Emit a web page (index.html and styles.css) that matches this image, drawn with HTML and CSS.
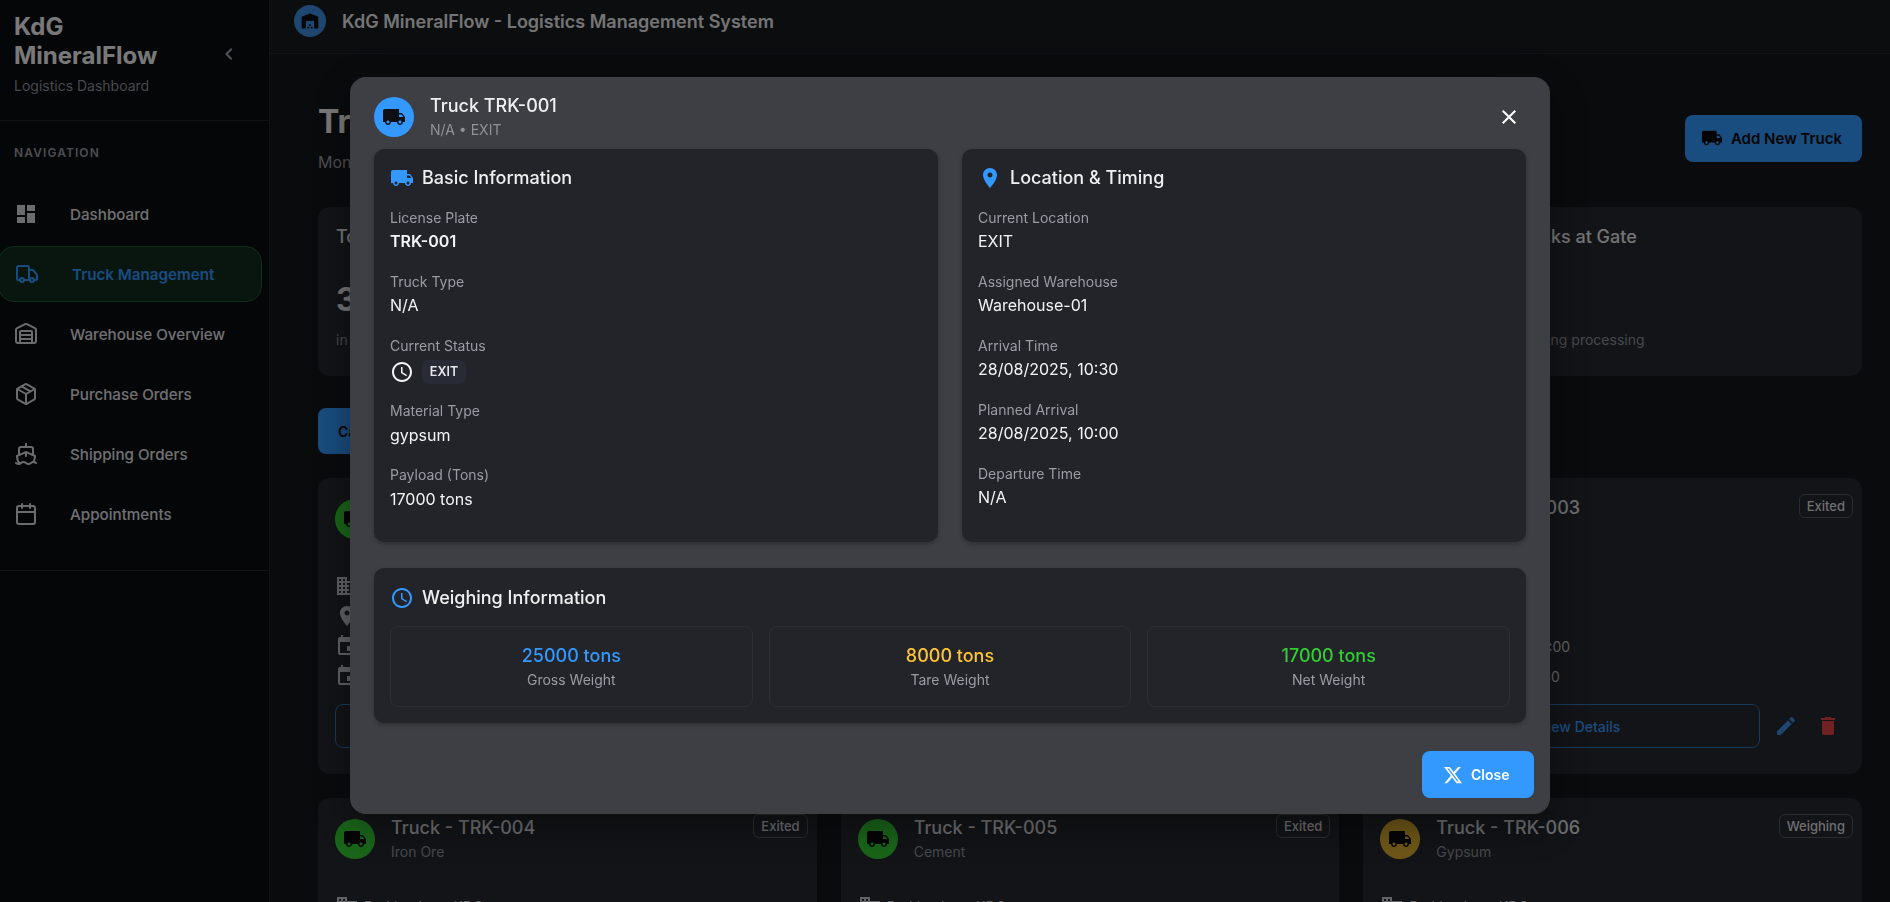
FILE: index.html
```html
<!DOCTYPE html>
<html lang="en">
<head>
<meta charset="UTF-8">
<meta name="viewport" content="width=device-width, initial-scale=1.0">
<title>KdG MineralFlow - Truck Management</title>
<link rel="stylesheet" href="styles.css">
</head>
<body>
<svg class="icon-defs" aria-hidden="true">
    <symbol id="i-truck" viewBox="0 0 24 24"><path d="M20 8h-3V4H3c-1.1 0-2 .9-2 2v11h2c0 1.66 1.34 3 3 3s3-1.34 3-3h6c0 1.66 1.34 3 3 3s3-1.34 3-3h2v-5zM6 18.5c-.83 0-1.5-.67-1.5-1.5s.67-1.5 1.5-1.5 1.5.67 1.5 1.5-.67 1.5-1.5 1.5m13.5-9 1.96 2.5H17V9.5zM18 18.5c-.83 0-1.5-.67-1.5-1.5s.67-1.5 1.5-1.5 1.5.67 1.5 1.5-.67 1.5-1.5 1.5"/></symbol>
    <symbol id="i-pin" viewBox="0 0 24 24"><path d="M12 2C8.13 2 5 5.13 5 9c0 5.25 7 13 7 13s7-7.75 7-13c0-3.87-3.13-7-7-7m0 9.5c-1.38 0-2.5-1.12-2.5-2.5s1.12-2.5 2.5-2.5 2.5 1.12 2.5 2.5-1.12 2.5-2.5 2.5"/></symbol>
    <symbol id="i-clock" viewBox="0 0 24 24"><path d="M11.99 2C6.47 2 2 6.48 2 12s4.47 10 9.99 10C17.52 22 22 17.52 22 12S17.52 2 11.99 2M12 20c-4.42 0-8-3.58-8-8s3.58-8 8-8 8 3.58 8 8-3.58 8-8 8m.5-13H11v6l5.25 3.15.75-1.23-4.5-2.67z"/></symbol>
    <symbol id="i-edit" viewBox="0 0 24 24"><path d="M3 17.25V21h3.75L17.81 9.94l-3.75-3.75zM20.71 7.04c.39-.39.39-1.02 0-1.41l-2.34-2.34a.996.996 0 0 0-1.41 0l-1.83 1.83 3.75 3.75z"/></symbol>
    <symbol id="i-delete" viewBox="0 0 24 24"><path d="M6 19c0 1.1.9 2 2 2h8c1.1 0 2-.9 2-2V7H6zM19 4h-3.5l-1-1h-5l-1 1H5v2h14z"/></symbol>
    <symbol id="i-domain" viewBox="0 0 24 24"><path d="M12 7V3H2v18h20V7zM6 19H4v-2h2zm0-4H4v-2h2zm0-4H4V9h2zm0-4H4V5h2zm4 12H8v-2h2zm0-4H8v-2h2zm0-4H8V9h2zm0-4H8V5h2zm10 12h-8v-2h2v-2h-2v-2h2v-2h-2V9h8zm-2-8h-2v2h2zm0 4h-2v2h2z"/></symbol>
    <symbol id="i-event" viewBox="0 0 24 24"><path d="M17 12h-5v5h5zM16 1v2H8V1H6v2H5c-1.11 0-1.99.9-1.99 2L3 19c0 1.1.89 2 2 2h14c1.1 0 2-.9 2-2V5c0-1.1-.9-2-2-2h-1V1zm3 18H5V8h14z"/></symbol>
</svg>

<div class="app">
    <aside class="sidebar">
        <div class="side-head">
            <div>
                <div class="brand">KdG MineralFlow</div>
                <div class="brand-sub">Logistics Dashboard</div>
            </div>
            <svg class="chevron" viewBox="0 0 24 24"><path d="M15.41 7.41 14 6l-6 6 6 6 1.41-1.41L10.83 12z"/></svg>
        </div>
        <div class="nav-label">NAVIGATION</div>
        <nav class="nav">
            <a class="nav-item">
                <svg class="nav-icon fill" viewBox="0 0 24 24"><path d="M3 13h8V3H3zm0 8h8v-6H3zm10 0h8V11h-8zm0-18v6h8V3z"/></svg>
                Dashboard
            </a>
            <a class="nav-item active">
                <svg class="nav-icon" viewBox="0 0 24 24"><path d="M14 18V6a2 2 0 0 0-2-2H4a2 2 0 0 0-2 2v11a1 1 0 0 0 1 1h2"/><path d="M15 18H9"/><path d="M19 18h2a1 1 0 0 0 1-1v-3.65a1 1 0 0 0-.22-.624l-3.48-4.35A1 1 0 0 0 17.52 8H14"/><circle cx="17" cy="18" r="2"/><circle cx="7" cy="18" r="2"/></svg>
                Truck Management
            </a>
            <a class="nav-item">
                <svg class="nav-icon" viewBox="0 0 24 24"><path d="M18 21V10a1 1 0 0 0-1-1H7a1 1 0 0 0-1 1v11"/><path d="M22 19a2 2 0 0 1-2 2H4a2 2 0 0 1-2-2V8a2 2 0 0 1 1.132-1.803l7.95-3.974a2 2 0 0 1 1.837 0l7.948 3.974A2 2 0 0 1 22 8z"/><path d="M6 13h12"/><path d="M6 17h12"/></svg>
                Warehouse Overview
            </a>
            <a class="nav-item">
                <svg class="nav-icon" viewBox="0 0 24 24"><path d="M11 21.73a2 2 0 0 0 2 0l7-4A2 2 0 0 0 21 16V8a2 2 0 0 0-1-1.73l-7-4a2 2 0 0 0-2 0l-7 4A2 2 0 0 0 3 8v8a2 2 0 0 0 1 1.73z"/><path d="M12 22V12"/><path d="m3.3 7 8.7 5 8.7-5"/><path d="m7.5 4.27 9 5.15"/></svg>
                Purchase Orders
            </a>
            <a class="nav-item">
                <svg class="nav-icon" viewBox="0 0 24 24"><path d="M12 10.189V14"/><path d="M12 2v3"/><path d="M19 13V7a2 2 0 0 0-2-2H7a2 2 0 0 0-2 2v6"/><path d="M19.38 20A11.6 11.6 0 0 0 21 14l-8.188-3.639a2 2 0 0 0-1.624 0L3 14a11.6 11.6 0 0 0 2.81 7.76"/><path d="M2 21c.6.5 1.2 1 2.5 1 2.5 0 2.5-2 5-2 1.3 0 1.9.5 2.5 1s1.2 1 2.5 1c2.5 0 2.5-2 5-2 1.3 0 1.9.5 2.5 1"/></svg>
                Shipping Orders
            </a>
            <a class="nav-item">
                <svg class="nav-icon" viewBox="0 0 24 24"><path d="M8 2v4"/><path d="M16 2v4"/><rect x="3" y="4" width="18" height="18" rx="2"/><path d="M3 10h18"/></svg>
                Appointments
            </a>
        </nav>
    </aside>

    <div class="page">
        <header class="topbar">
            <span class="top-logo">
                <svg viewBox="0 0 24 24"><path d="M22 21V7L12 3 2 7v14h5v-9h10v9zm-11-2H9v2h2zm2-3h-2v2h2zm2 3h-2v2h2z"/></svg>
            </span>
            <span class="top-title">KdG MineralFlow - Logistics Management System</span>
        </header>

        <main class="content">
            <div class="title-row">
                <div>
                    <h1 class="page-title">Truck Management</h1>
                    <p class="page-sub">Monitor and manage all trucks in the system</p>
                </div>
                <button class="add-btn"><svg><use href="#i-truck"/></svg>Add New Truck</button>
            </div>

            <section class="stats">
                <div class="stat"><div class="stat-name">Total Trucks</div><div class="stat-num">31</div><div class="stat-note">in the system</div></div>
                <div class="stat"><div class="stat-name">Weighing</div><div class="stat-num">4</div><div class="stat-note">on the scale</div></div>
                <div class="stat"><div class="stat-name">Exited</div><div class="stat-num">18</div><div class="stat-note">completed today</div></div>
                <div class="stat"><div class="stat-name">Trucks at Gate</div><div class="stat-num"></div><div class="stat-note">awaiting processing</div></div>
            </section>

            <button class="tab-btn">Card View</button>

            <section class="trucks">
                <article class="truck">
                    <div class="truck-head">
                        <span class="avatar green"><svg><use href="#i-truck"/></svg></span>
                        <div class="truck-names"><div class="truck-name">Truck - TRK-001</div><div class="truck-type">Gypsum</div></div>
                        <span class="badge">Exited</span>
                    </div>
                    <div class="truck-rows">
                        <div class="truck-row"><svg><use href="#i-domain"/></svg>Parking Lot - KDG</div>
                        <div class="truck-row"><svg><use href="#i-pin"/></svg>EXIT</div>
                        <div class="truck-row"><svg><use href="#i-event"/></svg>Dock 28/08/2025, 10:00</div>
                        <div class="truck-row"><svg><use href="#i-event"/></svg>Exit 28/08/2025, 10:30</div>
                    </div>
                    <div class="truck-actions">
                        <button class="view-btn">View Details</button>
                        <button class="icon-btn edit"><svg><use href="#i-edit"/></svg></button>
                        <button class="icon-btn del"><svg><use href="#i-delete"/></svg></button>
                    </div>
                </article>
                <article class="truck">
                    <div class="truck-head">
                        <span class="avatar green"><svg><use href="#i-truck"/></svg></span>
                        <div class="truck-names"><div class="truck-name">Truck - TRK-002</div><div class="truck-type">Iron Ore</div></div>
                        <span class="badge">Exited</span>
                    </div>
                    <div class="truck-rows">
                        <div class="truck-row"><svg><use href="#i-domain"/></svg>Parking Lot - KDG</div>
                        <div class="truck-row"><svg><use href="#i-pin"/></svg>EXIT</div>
                        <div class="truck-row"><svg><use href="#i-event"/></svg>Dock 28/08/2025, 11:00</div>
                        <div class="truck-row"><svg><use href="#i-event"/></svg>Exit 28/08/2025, 11:30</div>
                    </div>
                    <div class="truck-actions">
                        <button class="view-btn">View Details</button>
                        <button class="icon-btn edit"><svg><use href="#i-edit"/></svg></button>
                        <button class="icon-btn del"><svg><use href="#i-delete"/></svg></button>
                    </div>
                </article>
                <article class="truck">
                    <div class="truck-head">
                        <span class="avatar green"><svg><use href="#i-truck"/></svg></span>
                        <div class="truck-names"><div class="truck-name">Truck - TRK-003</div><div class="truck-type">Cement</div></div>
                        <span class="badge">Exited</span>
                    </div>
                    <div class="truck-rows">
                        <div class="truck-row"><svg><use href="#i-domain"/></svg>Parking Lot - KDG</div>
                        <div class="truck-row"><svg><use href="#i-pin"/></svg>EXIT</div>
                        <div class="truck-row"><svg><use href="#i-event"/></svg>Dock 28/08/2025, 12:00</div>
                        <div class="truck-row"><svg><use href="#i-event"/></svg>Exit 28/08/2025, 12:30</div>
                    </div>
                    <div class="truck-actions">
                        <button class="view-btn">View Details</button>
                        <button class="icon-btn edit"><svg><use href="#i-edit"/></svg></button>
                        <button class="icon-btn del"><svg><use href="#i-delete"/></svg></button>
                    </div>
                </article>
                <article class="truck">
                    <div class="truck-head">
                        <span class="avatar green"><svg><use href="#i-truck"/></svg></span>
                        <div class="truck-names"><div class="truck-name">Truck - TRK-004</div><div class="truck-type">Iron Ore</div></div>
                        <span class="badge">Exited</span>
                    </div>
                    <div class="truck-rows">
                        <div class="truck-row"><svg><use href="#i-domain"/></svg>Parking Lot - KDG</div>
                    </div>
                </article>
                <article class="truck">
                    <div class="truck-head">
                        <span class="avatar green"><svg><use href="#i-truck"/></svg></span>
                        <div class="truck-names"><div class="truck-name">Truck - TRK-005</div><div class="truck-type">Cement</div></div>
                        <span class="badge">Exited</span>
                    </div>
                    <div class="truck-rows">
                        <div class="truck-row"><svg><use href="#i-domain"/></svg>Parking Lot - KDG</div>
                    </div>
                </article>
                <article class="truck">
                    <div class="truck-head">
                        <span class="avatar yellow"><svg><use href="#i-truck"/></svg></span>
                        <div class="truck-names"><div class="truck-name">Truck - TRK-006</div><div class="truck-type">Gypsum</div></div>
                        <span class="badge">Weighing</span>
                    </div>
                    <div class="truck-rows">
                        <div class="truck-row"><svg><use href="#i-domain"/></svg>Parking Lot - KDG</div>
                    </div>
                </article>
            </section>
        </main>
    </div>
</div>

<div class="overlay">
    <div class="modal">
        <div class="modal-head">
            <span class="modal-avatar"><svg><use href="#i-truck"/></svg></span>
            <div class="modal-names">
                <div class="modal-title">Truck TRK-001</div>
                <div class="modal-sub">N/A • EXIT</div>
            </div>
            <button class="modal-x"><svg viewBox="0 0 24 24"><path d="M19 6.41 17.59 5 12 10.59 6.41 5 5 6.41 10.59 12 5 17.59 6.41 19 12 13.41 17.59 19 19 17.59 13.41 12z"/></svg></button>
        </div>

        <div class="modal-grid">
            <section class="panel">
                <h2 class="panel-title"><svg><use href="#i-truck"/></svg>Basic Information</h2>
                <div class="field"><div class="field-label">License Plate</div><div class="field-value bold">TRK-001</div></div>
                <div class="field"><div class="field-label">Truck Type</div><div class="field-value">N/A</div></div>
                <div class="field status-field">
                    <div class="field-label">Current Status</div>
                    <div class="status-row"><svg><use href="#i-clock"/></svg><span class="chip">EXIT</span></div>
                </div>
                <div class="field loose"><div class="field-label">Material Type</div><div class="field-value">gypsum</div></div>
                <div class="field loose"><div class="field-label">Payload (Tons)</div><div class="field-value">17000 tons</div></div>
            </section>
            <section class="panel">
                <h2 class="panel-title"><svg><use href="#i-pin"/></svg>Location &amp; Timing</h2>
                <div class="field"><div class="field-label">Current Location</div><div class="field-value">EXIT</div></div>
                <div class="field"><div class="field-label">Assigned Warehouse</div><div class="field-value">Warehouse-01</div></div>
                <div class="field"><div class="field-label">Arrival Time</div><div class="field-value">28/08/2025, 10:30</div></div>
                <div class="field"><div class="field-label">Planned Arrival</div><div class="field-value">28/08/2025, 10:00</div></div>
                <div class="field"><div class="field-label">Departure Time</div><div class="field-value">N/A</div></div>
            </section>
        </div>

        <section class="panel weigh-panel">
            <h2 class="panel-title"><svg><use href="#i-clock"/></svg>Weighing Information</h2>
            <div class="weigh-grid">
                <div class="weigh"><div class="weigh-num blue">25000 tons</div><div class="weigh-label">Gross Weight</div></div>
                <div class="weigh"><div class="weigh-num amber">8000 tons</div><div class="weigh-label">Tare Weight</div></div>
                <div class="weigh"><div class="weigh-num lime">17000 tons</div><div class="weigh-label">Net Weight</div></div>
            </div>
        </section>

        <div class="modal-foot">
            <button class="close-btn">
                <svg viewBox="0 0 24 24"><path d="M18.244 2.25h3.308l-7.227 8.26 8.502 11.24H16.17l-5.214-6.817L4.99 21.75H1.68l7.73-8.835L1.254 2.25H8.08l4.713 6.231zm-1.161 17.52h1.833L7.084 4.126H5.117z"/></svg>
                Close
            </button>
        </div>
    </div>
</div>
</body>
</html>
```

FILE: styles.css
```css
* {
    box-sizing: border-box;
}

html, body {
    margin: 0;
    height: 100%;
    overflow: hidden;
}

body {
    font-family: Inter, "Liberation Sans", sans-serif;
    background: #14161a;
    color: #f3f4f6;
}

button {
    font-family: inherit;
    border: none;
    background: none;
}

.icon-defs {
    display: none;
}

svg {
    fill: currentColor;
}

.app {
    display: flex;
    height: 902px;
    overflow: hidden;
}

/* sidebar */
.sidebar {
    width: 270px;
    flex-shrink: 0;
    height: 902px;
    background: #0a0c10;
    border-right: 1px solid #24262b;
}

.side-head {
    display: flex;
    align-items: center;
    justify-content: space-between;
    padding: 12px 28px 24px 14px;
    border-bottom: 1px solid #24262b;
}

.brand {
    width: 170px;
    font-size: 24px;
    line-height: 29px;
    font-weight: 700;
    color: #f3f3f3;
}

.brand-sub {
    margin-top: 6px;
    font-size: 14px;
    line-height: 20px;
    color: #8e9198;
}

.chevron {
    width: 24px;
    height: 24px;
    color: #a2a5ab;
}

.nav-label {
    margin: 24px 0 25px 14px;
    font-size: 12px;
    line-height: 16px;
    font-weight: 600;
    letter-spacing: 1.1px;
    color: #9a9ca3;
}

.nav {
    padding-bottom: 24px;
    border-bottom: 1px solid #24262b;
}

.nav-item {
    display: flex;
    align-items: center;
    gap: 32px;
    width: 262px;
    height: 56px;
    margin-bottom: 4px;
    padding-left: 14px;
    font-size: 15.2px;
    font-weight: 500;
    color: #e0e1e4;
}

.nav-icon {
    width: 24px;
    height: 24px;
    flex-shrink: 0;
    fill: none;
    stroke: #d8d9dc;
    stroke-width: 2;
    stroke-linecap: round;
    stroke-linejoin: round;
}

.nav-icon.fill {
    fill: #d8d9dc;
    stroke: none;
}

.nav-item.active {
    width: 264px;
    margin-left: -2px;
    padding-left: 16px;
    gap: 33px;
    font-weight: 600;
    color: #3399ff;
    background: #122c1e;
    border: 1px solid #1f5a33;
    border-radius: 16px;
}

.nav-item.active .nav-icon {
    stroke: #3399ff;
}

/* top bar and page */
.page {
    flex: 1;
    min-width: 0;
}

.topbar {
    display: flex;
    align-items: flex-start;
    gap: 16px;
    height: 54px;
    padding: 5px 0 0 24px;
    background: #181a1f;
    border-bottom: 1px solid #24262b;
}

.top-logo {
    display: flex;
    align-items: center;
    justify-content: center;
    width: 32px;
    height: 32px;
    border-radius: 50%;
    background: #3d8ddd;
    color: #0a0c10;
}

.top-logo svg {
    width: 20px;
    height: 20px;
}

.top-title {
    font-size: 18px;
    line-height: 34px;
    font-weight: 600;
    color: #e8e9eb;
}

.content {
    padding: 48px 28px 0 48px;
}

.title-row {
    display: flex;
    align-items: center;
    justify-content: space-between;
}

.page-title {
    margin: 0;
    font-size: 32px;
    line-height: 40px;
    font-weight: 700;
    color: #f3f3f3;
}

.page-sub {
    margin: 8px 0 0;
    font-size: 16px;
    line-height: 24px;
    color: #9a9ca3;
}

.add-btn {
    display: flex;
    align-items: center;
    gap: 8px;
    height: 47px;
    padding: 0 20px 0 16px;
    border-radius: 8px;
    background: #3399ff;
    color: #0a0a0a;
    font-size: 15px;
    font-weight: 600;
}

.add-btn svg {
    width: 22px;
    height: 22px;
}

.stats {
    display: grid;
    grid-template-columns: repeat(4, 1fr);
    gap: 24px;
    margin-top: 33px;
}

.stat {
    height: 169px;
    padding: 18px;
    border-radius: 12px;
    background: #26282e;
}

.stat-name {
    font-size: 18px;
    line-height: 24px;
    font-weight: 500;
    color: #e8e9eb;
}

.stat-num {
    height: 40px;
    margin-top: 31px;
    font-size: 32px;
    line-height: 40px;
    font-weight: 700;
    color: #e8e9eb;
}

.stat-note {
    margin-top: 10px;
    font-size: 14px;
    line-height: 20px;
    color: #8e9198;
}

.tab-btn {
    display: block;
    width: 130px;
    height: 46px;
    margin-top: 32px;
    border-radius: 8px;
    background: #3399ff;
    color: #0a0a0a;
    font-size: 14px;
    font-weight: 600;
    text-align: left;
    padding-left: 20px;
}

/* truck cards */
.trucks {
    display: grid;
    grid-template-columns: repeat(3, 1fr);
    gap: 24px;
    margin-top: 24px;
}

.truck {
    min-height: 296px;
    padding: 16px 17px 26px;
    border-radius: 12px;
    background: #26282e;
}

.truck-head {
    display: flex;
    align-items: flex-start;
    gap: 16px;
}

.avatar {
    display: flex;
    align-items: center;
    justify-content: center;
    flex-shrink: 0;
    width: 40px;
    height: 40px;
    margin-top: 5px;
    border-radius: 50%;
    color: #0a0a0a;
}

.avatar svg {
    width: 24px;
    height: 24px;
}

.avatar.green {
    background: #33cc33;
}

.avatar.yellow {
    background: #e0b030;
}

.truck-names {
    flex: 1;
}

.truck-name {
    font-size: 18px;
    line-height: 28px;
    font-weight: 500;
    color: #dcdde0;
}

.truck-type {
    font-size: 14px;
    line-height: 20px;
    color: #8e9198;
}

.badge {
    height: 24px;
    margin-right: -8px;
    padding: 0 7px;
    border: 1px solid #55575d;
    border-radius: 6px;
    font-size: 13px;
    line-height: 22px;
    font-weight: 500;
    color: #dcdde0;
}

.truck-rows {
    display: flex;
    flex-direction: column;
    gap: 6px;
    margin-top: 32px;
}

.truck-row {
    display: flex;
    align-items: center;
    gap: 5px;
    height: 24px;
    font-size: 14px;
    color: #c4c6ca;
}

.truck-row svg {
    width: 24px;
    height: 24px;
    color: #c4c6ca;
}

.truck-actions {
    display: flex;
    align-items: center;
    margin-top: 16px;
}

.view-btn {
    flex: 1;
    height: 44px;
    padding-left: 24px;
    border: 1px solid #2d73b8;
    border-radius: 8px;
    color: #3399ff;
    font-size: 14px;
    font-weight: 500;
}

.icon-btn {
    width: 40px;
    height: 40px;
    padding: 8px;
}

.icon-btn svg {
    width: 24px;
    height: 24px;
}

.icon-btn.edit {
    margin-left: 6px;
    color: #3d8ddd;
}

.icon-btn.del {
    margin: 0 -3px 0 2px;
    color: #e04444;
}

/* dialog */
.overlay {
    position: fixed;
    inset: 0;
    background: rgba(0, 0, 0, 0.5);
}

.modal {
    position: absolute;
    left: 350px;
    top: 77px;
    width: 1200px;
    height: 737px;
    padding: 15px 24px 0;
    border-radius: 16px;
    background: #3e3f44;
    box-shadow: 0 12px 40px rgba(0, 0, 0, 0.4);
}

.modal-head {
    display: flex;
    align-items: flex-start;
    gap: 16px;
    height: 48px;
    margin-bottom: 9px;
}

.modal-avatar {
    display: flex;
    align-items: center;
    justify-content: center;
    width: 40px;
    height: 40px;
    margin-top: 5px;
    border-radius: 50%;
    background: #3399ff;
    color: #0e1014;
}

.modal-avatar svg {
    width: 24px;
    height: 24px;
}

.modal-names {
    flex: 1;
}

.modal-title {
    font-size: 18px;
    line-height: 28px;
    font-weight: 500;
    color: #f0f0f2;
}

.modal-sub {
    font-size: 14px;
    line-height: 20px;
    color: #8f9299;
}

.modal-x {
    width: 40px;
    height: 40px;
    margin: 5px -3px 0 0;
    padding: 8px;
    color: #fff;
}

.modal-x svg {
    display: block;
    width: 24px;
    height: 24px;
}

.modal-grid {
    display: grid;
    grid-template-columns: 1fr 1fr;
    gap: 24px;
}

.panel {
    padding: 16px 16px 31px;
    border-radius: 10px;
    background: #232429;
    box-shadow: 0 2px 4px rgba(0, 0, 0, 0.25);
}

.panel-title {
    display: flex;
    align-items: center;
    gap: 8px;
    height: 26px;
    margin: 0 0 17px;
    font-size: 18px;
    line-height: 24px;
    font-weight: 500;
    color: #f0f0f2;
}

.panel-title svg {
    width: 24px;
    height: 24px;
    color: #3399ff;
}

.field {
    margin-bottom: 19px;
}

.field-label {
    font-size: 14px;
    line-height: 20px;
    color: #9a9da5;
}

.field-value {
    margin-top: 1px;
    font-size: 16px;
    line-height: 24px;
    color: #f3f4f6;
}

.field-value.bold {
    font-weight: 600;
}

.field.loose {
    margin-bottom: 18px;
}

.field.loose .field-value {
    margin-top: 2px;
}

.panel .field:last-child {
    margin-bottom: 0;
}

.status-field {
    margin-bottom: 17px;
}

.status-row {
    display: flex;
    align-items: center;
    gap: 8px;
    margin-top: 4px;
}

.status-row svg {
    width: 24px;
    height: 24px;
    color: #f3f4f6;
}

.chip {
    width: 44px;
    height: 24px;
    border-radius: 6px;
    background: #282b36;
    font-size: 12.5px;
    line-height: 24px;
    font-weight: 600;
    text-align: center;
    color: #e5e7eb;
}

.weigh-panel {
    margin-top: 26px;
    padding: 18px 16px 16px;
}

.weigh-panel .panel-title {
    height: 24px;
    margin-bottom: 16px;
}

.weigh-grid {
    display: grid;
    grid-template-columns: repeat(3, 1fr);
    gap: 16px;
}

.weigh {
    height: 81px;
    padding: 15px;
    border: 1px solid #2e2f35;
    border-radius: 8px;
    text-align: center;
}

.weigh-num {
    font-size: 18px;
    line-height: 28px;
    font-weight: 500;
}

.weigh-num.blue {
    color: #3399ff;
}

.weigh-num.amber {
    color: #ffc433;
}

.weigh-num.lime {
    color: #33cc33;
}

.weigh-label {
    font-size: 14px;
    line-height: 20px;
    color: #9a9da5;
}

.modal-foot {
    display: flex;
    justify-content: flex-end;
    margin: 28px -8px 0 0;
}

.close-btn {
    display: flex;
    align-items: center;
    gap: 8px;
    width: 112px;
    height: 47px;
    padding: 0 0 0 21px;
    border-radius: 8px;
    background: #3399ff;
    color: #fff;
    font-size: 14px;
    font-weight: 600;
}

.close-btn svg {
    width: 20px;
    height: 20px;
}
```
